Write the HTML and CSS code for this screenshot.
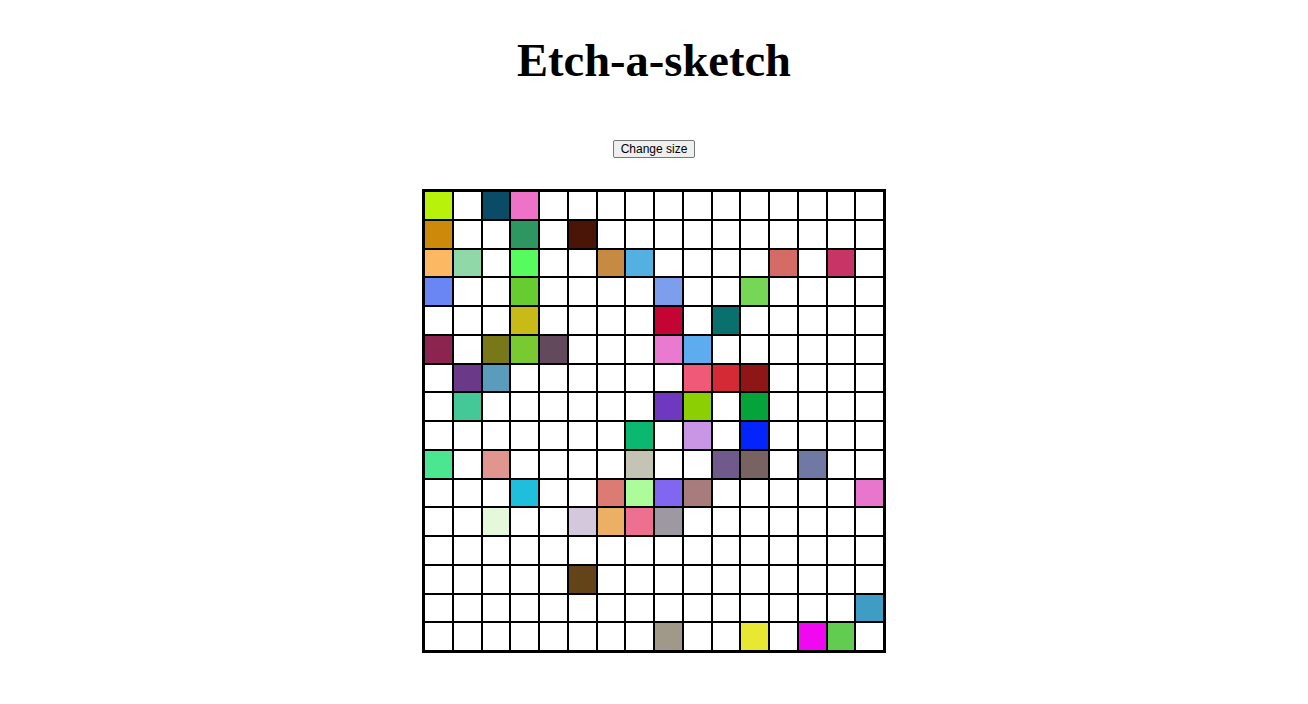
FILE: index.html
```html
<!DOCTYPE html>
<html lang="en">
<head>
<meta charset="utf-8">
<title>Etch-a-sketch</title>
<link rel="stylesheet" href="styles.css">
</head>
<body>
<main class="page">
  <h1 class="title">Etch-a-sketch</h1>
  <button class="size-btn" type="button">Change size</button>
  <div class="board">
    <div class="cell" style="background:#b8f20a"></div><div class="cell"></div><div class="cell" style="background:#0a4c66"></div><div class="cell" style="background:#ee72c8"></div><div class="cell"></div><div class="cell"></div><div class="cell"></div><div class="cell"></div><div class="cell"></div><div class="cell"></div><div class="cell"></div><div class="cell"></div><div class="cell"></div><div class="cell"></div><div class="cell"></div><div class="cell"></div>
    <div class="cell" style="background:#cd8a0a"></div><div class="cell"></div><div class="cell"></div><div class="cell" style="background:#2e9660"></div><div class="cell"></div><div class="cell" style="background:#4a1406"></div><div class="cell"></div><div class="cell"></div><div class="cell"></div><div class="cell"></div><div class="cell"></div><div class="cell"></div><div class="cell"></div><div class="cell"></div><div class="cell"></div><div class="cell"></div>
    <div class="cell" style="background:#fcb862"></div><div class="cell" style="background:#90d8a8"></div><div class="cell"></div><div class="cell" style="background:#56fc5e"></div><div class="cell"></div><div class="cell"></div><div class="cell" style="background:#c68a42"></div><div class="cell" style="background:#52b0e2"></div><div class="cell"></div><div class="cell"></div><div class="cell"></div><div class="cell"></div><div class="cell" style="background:#d46b64"></div><div class="cell"></div><div class="cell" style="background:#c83466"></div><div class="cell"></div>
    <div class="cell" style="background:#6a86f4"></div><div class="cell"></div><div class="cell"></div><div class="cell" style="background:#66cc30"></div><div class="cell"></div><div class="cell"></div><div class="cell"></div><div class="cell"></div><div class="cell" style="background:#7c9eec"></div><div class="cell"></div><div class="cell"></div><div class="cell" style="background:#76d656"></div><div class="cell"></div><div class="cell"></div><div class="cell"></div><div class="cell"></div>
    <div class="cell"></div><div class="cell"></div><div class="cell"></div><div class="cell" style="background:#c8bb18"></div><div class="cell"></div><div class="cell"></div><div class="cell"></div><div class="cell"></div><div class="cell" style="background:#c40432"></div><div class="cell"></div><div class="cell" style="background:#09706e"></div><div class="cell"></div><div class="cell"></div><div class="cell"></div><div class="cell"></div><div class="cell"></div>
    <div class="cell" style="background:#8c2450"></div><div class="cell"></div><div class="cell" style="background:#787818"></div><div class="cell" style="background:#78ca30"></div><div class="cell" style="background:#624a5c"></div><div class="cell"></div><div class="cell"></div><div class="cell"></div><div class="cell" style="background:#ea7ad0"></div><div class="cell" style="background:#5eacf0"></div><div class="cell"></div><div class="cell"></div><div class="cell"></div><div class="cell"></div><div class="cell"></div><div class="cell"></div>
    <div class="cell"></div><div class="cell" style="background:#6a3a88"></div><div class="cell" style="background:#5a9cbc"></div><div class="cell"></div><div class="cell"></div><div class="cell"></div><div class="cell"></div><div class="cell"></div><div class="cell"></div><div class="cell" style="background:#f05a78"></div><div class="cell" style="background:#d42a36"></div><div class="cell" style="background:#8e1616"></div><div class="cell"></div><div class="cell"></div><div class="cell"></div><div class="cell"></div>
    <div class="cell"></div><div class="cell" style="background:#44c898"></div><div class="cell"></div><div class="cell"></div><div class="cell"></div><div class="cell"></div><div class="cell"></div><div class="cell"></div><div class="cell" style="background:#7038c0"></div><div class="cell" style="background:#8cd004"></div><div class="cell"></div><div class="cell" style="background:#04a43a"></div><div class="cell"></div><div class="cell"></div><div class="cell"></div><div class="cell"></div>
    <div class="cell"></div><div class="cell"></div><div class="cell"></div><div class="cell"></div><div class="cell"></div><div class="cell"></div><div class="cell"></div><div class="cell" style="background:#0ab870"></div><div class="cell"></div><div class="cell" style="background:#c896e4"></div><div class="cell"></div><div class="cell" style="background:#0424fc"></div><div class="cell"></div><div class="cell"></div><div class="cell"></div><div class="cell"></div>
    <div class="cell" style="background:#4ae690"></div><div class="cell"></div><div class="cell" style="background:#e0968e"></div><div class="cell"></div><div class="cell"></div><div class="cell"></div><div class="cell"></div><div class="cell" style="background:#c4c4b4"></div><div class="cell"></div><div class="cell"></div><div class="cell" style="background:#705a8c"></div><div class="cell" style="background:#786262"></div><div class="cell"></div><div class="cell" style="background:#7078a4"></div><div class="cell"></div><div class="cell"></div>
    <div class="cell"></div><div class="cell"></div><div class="cell"></div><div class="cell" style="background:#1ebedc"></div><div class="cell"></div><div class="cell"></div><div class="cell" style="background:#dc7a74"></div><div class="cell" style="background:#acfc9a"></div><div class="cell" style="background:#8066f0"></div><div class="cell" style="background:#a87c7c"></div><div class="cell"></div><div class="cell"></div><div class="cell"></div><div class="cell"></div><div class="cell"></div><div class="cell" style="background:#e876cc"></div>
    <div class="cell"></div><div class="cell"></div><div class="cell" style="background:#e6f8da"></div><div class="cell"></div><div class="cell"></div><div class="cell" style="background:#d4c8dc"></div><div class="cell" style="background:#ebb064"></div><div class="cell" style="background:#ee7090"></div><div class="cell" style="background:#9e98a2"></div><div class="cell"></div><div class="cell"></div><div class="cell"></div><div class="cell"></div><div class="cell"></div><div class="cell"></div><div class="cell"></div>
    <div class="cell"></div><div class="cell"></div><div class="cell"></div><div class="cell"></div><div class="cell"></div><div class="cell"></div><div class="cell"></div><div class="cell"></div><div class="cell"></div><div class="cell"></div><div class="cell"></div><div class="cell"></div><div class="cell"></div><div class="cell"></div><div class="cell"></div><div class="cell"></div>
    <div class="cell"></div><div class="cell"></div><div class="cell"></div><div class="cell"></div><div class="cell"></div><div class="cell" style="background:#624418"></div><div class="cell"></div><div class="cell"></div><div class="cell"></div><div class="cell"></div><div class="cell"></div><div class="cell"></div><div class="cell"></div><div class="cell"></div><div class="cell"></div><div class="cell"></div>
    <div class="cell"></div><div class="cell"></div><div class="cell"></div><div class="cell"></div><div class="cell"></div><div class="cell"></div><div class="cell"></div><div class="cell"></div><div class="cell"></div><div class="cell"></div><div class="cell"></div><div class="cell"></div><div class="cell"></div><div class="cell"></div><div class="cell"></div><div class="cell" style="background:#3f9cc4"></div>
    <div class="cell"></div><div class="cell"></div><div class="cell"></div><div class="cell"></div><div class="cell"></div><div class="cell"></div><div class="cell"></div><div class="cell"></div><div class="cell" style="background:#a09888"></div><div class="cell"></div><div class="cell"></div><div class="cell" style="background:#e8e832"></div><div class="cell"></div><div class="cell" style="background:#f008f0"></div><div class="cell" style="background:#62cc50"></div><div class="cell"></div>
  </div>
</main>
</body>
</html>
```
FILE: styles.css
```css
html, body {
  margin: 0;
  padding: 0;
  background: #ffffff;
}

.page {
  display: flex;
  flex-direction: column;
  align-items: center;
  padding-top: 35px;
}

.title {
  margin: 0;
  font-family: "Liberation Serif", "Times New Roman", serif;
  font-weight: bold;
  font-size: 46.5px;
  line-height: 52px;
  color: #000000;
}

.size-btn {
  margin-top: 53px;
  font-family: "Liberation Sans", Arial, sans-serif;
  font-size: 12px;
  line-height: 14px;
  padding: 1px 7px;
  color: #000000;
  background: #efefef;
  border: 1px solid #767676;
  border-radius: 2px;
}

.board {
  margin-top: 31px;
  width: 460px;
  height: 460px;
  border: 2px solid #000000;
  display: grid;
  grid-template-columns: repeat(16, 1fr);
  grid-template-rows: repeat(16, 1fr);
}

.cell {
  border: 1px solid #000000;
  background: #ffffff;
}
```
